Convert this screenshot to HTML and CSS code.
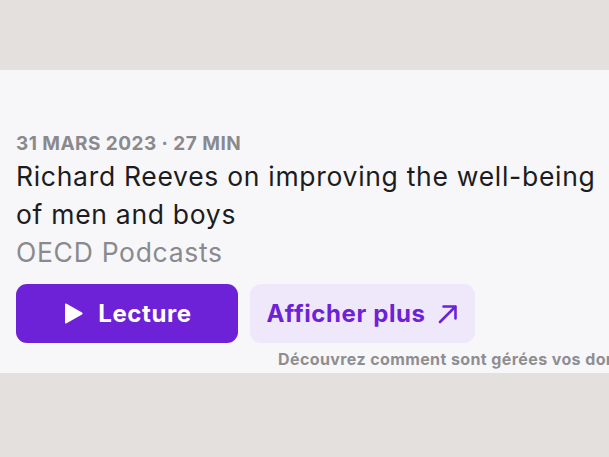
FILE: index.html
```html
<!DOCTYPE html>
<html lang="fr">
<head>
<meta charset="utf-8">
<title>Richard Reeves on improving the well-being of men and boys</title>
<link rel="stylesheet" href="styles.css">
</head>
<body>
<div class="page">
  <section class="card">
    <div class="meta">31 MARS 2023 · 27 MIN</div>
    <h1 class="title">Richard Reeves on improving the well-being of men and boys</h1>
    <div class="show">OECD Podcasts</div>
    <div class="actions">
      <button class="btn btn-play">
        <svg class="play-icon" width="22" height="24" viewBox="0 0 22 24"><path d="M3 2.5 Q3 0.8 4.6 1.7 L20 10.6 Q21.4 11.5 20 12.4 L4.6 21.3 Q3 22.2 3 20.5 Z" fill="#fff"/></svg>
        <span>Lecture</span>
      </button>
      <button class="btn btn-more">
        <span>Afficher plus</span>
        <svg class="arrow-icon" width="22" height="22" viewBox="0 0 22 22"><path d="M3 19 L18.5 3.5 M6.5 3.5 H18.5 V15.5" fill="none" stroke="#6d22d8" stroke-width="2.6" stroke-linecap="round" stroke-linejoin="round"/></svg>
      </button>
    </div>
    <div class="privacy">Découvrez comment sont gérées vos données</div>
  </section>
</div>
</body>
</html>
```
FILE: styles.css
```css
html, body {
  margin: 0;
  padding: 0;
  background: #e4e0de;
  font-family: Inter, "Liberation Sans", Arial, sans-serif;
  overflow: hidden;
}
.page {
  width: 609px;
  height: 457px;
  padding-top: 70px;
  box-sizing: border-box;
}
.card {
  background: #f7f7f9;
  height: 303px;
  box-sizing: border-box;
  padding: 63px 0 0 16px;
  overflow: hidden;
}
.meta {
  font-size: 19px;
  font-weight: 700;
  color: #8a8a8e;
  line-height: 22px;
  letter-spacing: 0.45px;
}
.title {
  margin: 2px 0 0;
  font-size: 26.5px;
  font-weight: 400;
  color: #1c1c1e;
  line-height: 38px;
  width: 590px;
  letter-spacing: 0.7px;
}
.show {
  font-size: 26.5px;
  color: #8a8a8e;
  line-height: 38px;
  letter-spacing: 0.7px;
}
.actions {
  display: flex;
  gap: 12px;
  margin-top: 13px;
}
.btn {
  border: none;
  border-radius: 11px;
  height: 59px;
  display: flex;
  align-items: center;
  justify-content: center;
  font-family: inherit;
  font-size: 24px;
  font-weight: 700;
  letter-spacing: 0.6px;
  padding: 0;
  cursor: pointer;
}
.btn-play {
  width: 222px;
  background: #6d22d8;
  color: #fff;
  gap: 14px;
}
.btn-more {
  width: 225px;
  background: #efe8fb;
  color: #6d22d8;
  gap: 11px;
}
.privacy {
  margin: 6px 0 0 262px;
  font-size: 16px;
  font-weight: 700;
  color: #8e8e92;
  white-space: nowrap;
  line-height: 20px;
  letter-spacing: 0.4px;
}
```
